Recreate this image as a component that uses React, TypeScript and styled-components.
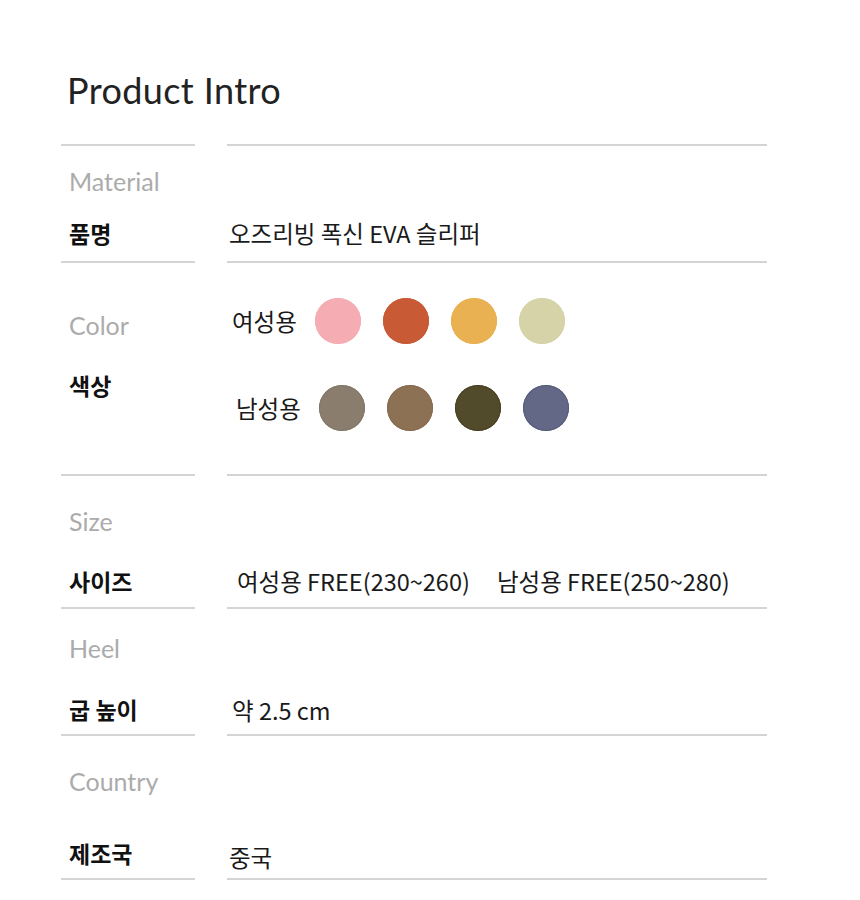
import React from 'react';
import styled, { createGlobalStyle } from 'styled-components';

const GlobalStyles = createGlobalStyle`
  body {
    margin: 0;
    background: #ffffff;
    font-family: "Noto Sans CJK KR", "Noto Sans", sans-serif;
  }
`;

const Page = styled.div`
  width: 860px;
  height: 900px;
  padding: 0 93px 0 61px;
  box-sizing: border-box;
  background: #fff;
`;

const Header = styled.div`
  height: 144px;
  display: flex;
  align-items: flex-start;
`;

const Title = styled.h1`
  margin: 66px 0 0 6px;
  font-family: "Lato", "Open Sans", sans-serif;
  font-weight: 400;
  font-size: 36px;
  line-height: 48px;
  color: #222;
  letter-spacing: 0.4px;
`;

const Section = styled.section<{ $h: number }>`
  display: grid;
  grid-template-columns: 134px 540px;
  column-gap: 32px;
  height: ${(p) => p.$h}px;
`;

const LeftCell = styled.div`
  display: flex;
  flex-direction: column;
  border-top: 2px solid #d4d4d4;
  padding-left: 8px;
`;

const RightCell = styled.div<{ $top: number; $left?: number }>`
  border-top: 2px solid #d4d4d4;
  padding-top: ${(p) => p.$top}px;
  padding-left: ${(p) => p.$left ?? 2}px;
  display: flex;
  flex-direction: column;
`;

const EngLabel = styled.div<{ $top: number }>`
  margin-top: ${(p) => p.$top}px;
  font-family: "Lato", "Open Sans", sans-serif;
  font-size: 25px;
  line-height: 30px;
  color: #ababab;
`;

const KorLabel = styled.div<{ $top: number }>`
  margin-top: ${(p) => p.$top}px;
  font-family: "Noto Sans CJK KR", sans-serif;
  font-weight: 700;
  font-size: 23px;
  line-height: 30px;
  color: #111;
`;

const Value = styled.div`
  font-family: "Noto Sans CJK KR", sans-serif;
  font-size: 23.5px;
  line-height: 30px;
  color: #1a1a1a;
  letter-spacing: 0;
  white-space: pre;
`;

const SizeLine = styled(Value)`
  display: flex;
  gap: 27px;
`;

const SwatchRow = styled.div<{ $indent: number; $top: number }>`
  display: flex;
  align-items: center;
  margin-top: ${(p) => p.$top}px;
  padding-left: ${(p) => p.$indent}px;
  height: 48px;
`;

const SwatchLabel = styled(Value)`
  width: 83px;
  flex: none;
`;

const Swatches = styled.div`
  display: flex;
  gap: 22px;
`;

const Dot = styled.span<{ $c: string; $edge?: string }>`
  width: 46px;
  height: 46px;
  border-radius: 50%;
  background: ${(p) => p.$c};
  box-shadow: inset 0 0 0 1px ${(p) => p.$edge ?? p.$c};
  display: block;
`;

const women = ['#f5adb3', '#c85a36', '#e9b152', '#d5d3a7'];
const men = [
  { c: '#8a7d6d', e: '#837665' },
  { c: '#8d7155', e: '#866a4e' },
  { c: '#514a2b', e: '#463f22' },
  { c: '#626886', e: '#545a78' },
];

const BottomLine = styled.div`
  display: grid;
  grid-template-columns: 134px 540px;
  column-gap: 32px;
  & > div {
    border-top: 2px solid #d4d4d4;
  }
`;

export default function App() {
  return (
    <>
      <GlobalStyles />
      <Page>
        <Header>
          <Title>Product Intro</Title>
        </Header>

        <Section $h={117}>
          <LeftCell>
            <EngLabel $top={20}>Material</EngLabel>
            <KorLabel $top={22}>품명</KorLabel>
          </LeftCell>
          <RightCell $top={72}>
            <Value>오즈리빙 폭신 EVA 슬리퍼</Value>
          </RightCell>
        </Section>

        <Section $h={213}>
          <LeftCell>
            <EngLabel $top={47}>Color</EngLabel>
            <KorLabel $top={30}>색상</KorLabel>
          </LeftCell>
          <RightCell $top={34}>
            <SwatchRow $indent={3} $top={0}>
              <SwatchLabel>여성용</SwatchLabel>
              <Swatches>
                {women.map((c) => (
                  <Dot key={c} $c={c} />
                ))}
              </Swatches>
            </SwatchRow>
            <SwatchRow $indent={7} $top={39}>
              <SwatchLabel>남성용</SwatchLabel>
              <Swatches>
                {men.map((m) => (
                  <Dot key={m.c} $c={m.c} $edge={m.e} />
                ))}
              </Swatches>
            </SwatchRow>
          </RightCell>
        </Section>

        <Section $h={133}>
          <LeftCell>
            <EngLabel $top={30}>Size</EngLabel>
            <KorLabel $top={30}>사이즈</KorLabel>
          </LeftCell>
          <RightCell $top={90} $left={10}>
            <SizeLine>
              <span>여성용 FREE(230~260)</span>
              <span>남성용 FREE(250~280)</span>
            </SizeLine>
          </RightCell>
        </Section>

        <Section $h={127}>
          <LeftCell>
            <EngLabel $top={24}>Heel</EngLabel>
            <KorLabel $top={31}>굽 높이</KorLabel>
          </LeftCell>
          <RightCell $top={86} $left={5}>
            <Value>약 2.5 cm</Value>
          </RightCell>
        </Section>

        <Section $h={144}>
          <LeftCell>
            <EngLabel $top={30}>Country</EngLabel>
            <KorLabel $top={42}>제조국</KorLabel>
          </LeftCell>
          <RightCell $top={106}>
            <Value>중국</Value>
          </RightCell>
        </Section>

        <BottomLine>
          <div />
          <div />
        </BottomLine>
      </Page>
    </>
  );
}
